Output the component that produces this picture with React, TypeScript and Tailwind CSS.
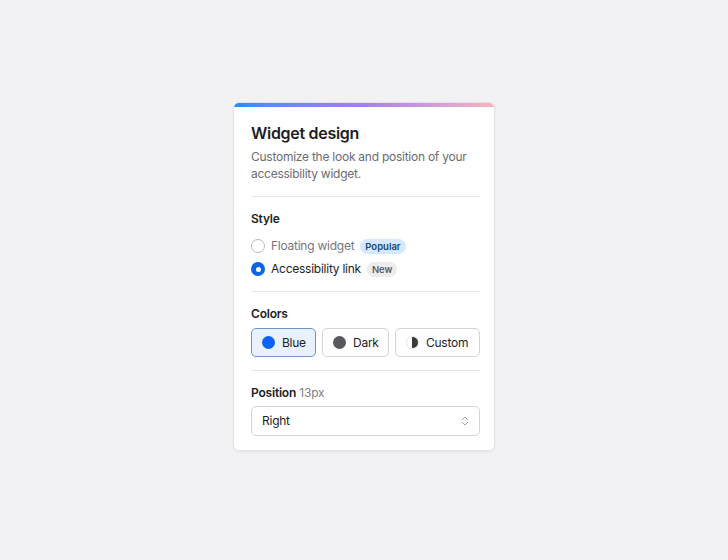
import { ChevronsUpDown } from "lucide-react";

function Radio({ checked }: { checked: boolean }) {
  return checked ? (
    <span className="flex size-[14px] items-center justify-center rounded-full bg-[#0a66e4]">
      <span className="size-[5px] rounded-full bg-white" />
    </span>
  ) : (
    <span className="size-[14px] rounded-full border border-[#b9b9bf] bg-white" />
  );
}

export default function App() {
  return (
    <div
      className="flex min-h-[560px] w-full items-start justify-center bg-[#f2f2f5] pt-[102px] text-[#1d1d1f]"
      style={{ fontFamily: "Inter, 'Liberation Sans', sans-serif" }}
    >
      <div className="w-[262px] overflow-hidden rounded-[6px] border border-[#e3e3e8] bg-white shadow-[0_1px_3px_rgba(0,0,0,0.06)]">
        <div className="h-[4px] bg-gradient-to-r from-[#1a8fef] via-[#a57ef0] to-[#fbb4bd]" />
        <div className="pb-[14px] pl-[17px] pr-[14px] pt-[15px]">
          <h2 className="text-[16px] font-semibold leading-[22px] tracking-[-0.3px]">
            Widget design
          </h2>
          <p className="mt-[5px] text-[12px] leading-[16.5px] tracking-[-0.25px] text-[#6b6b72]">
            Customize the look and position of your accessibility widget.
          </p>

          <div className="mt-[14px] border-t border-[#e6e6ea]" />

          <div className="pt-[14px]">
            <div className="text-[12px] font-semibold leading-[16px] tracking-[-0.2px]">Style</div>
            <div className="mt-[11px] flex flex-col gap-[7px]">
              <div className="flex h-[16px] items-center gap-[6px]">
                <Radio checked={false} />
                <span className="text-[12px] tracking-[-0.25px] text-[#76767d]">Floating widget</span>
                <span className="rounded-full bg-[#d6e8fd] px-[5px] py-[1px] text-[9.5px] font-semibold leading-[13px] text-[#17457a]">
                  Popular
                </span>
              </div>
              <div className="flex h-[16px] items-center gap-[6px]">
                <Radio checked />
                <span className="text-[12px] tracking-[-0.25px] text-[#1d1d1f]">Accessibility link</span>
                <span className="rounded-full bg-[#ececef] px-[5px] py-[1px] text-[9.5px] font-medium leading-[13px] text-[#4a4a50]">
                  New
                </span>
              </div>
            </div>
          </div>

          <div className="mt-[14px] border-t border-[#e6e6ea]" />

          <div className="pt-[14px]">
            <div className="text-[12px] font-semibold leading-[16px] tracking-[-0.2px]">Colors</div>
            <div className="mt-[6px] flex gap-[6px] text-[12px] tracking-[-0.25px]">
              <button
                type="button"
                className="flex h-[29px] w-[65px] items-center gap-[7px] rounded-[5px] border border-[#6e95c6] bg-[#e8f1fc] px-[10px]"
              >
                <span className="size-[13px] shrink-0 rounded-full bg-[#0b63f6]" />
                Blue
              </button>
              <button
                type="button"
                className="flex h-[29px] w-[67px] items-center gap-[7px] rounded-[5px] border border-[#d4d4d9] bg-white px-[10px]"
              >
                <span className="size-[13px] shrink-0 rounded-full bg-[#58585d]" />
                Dark
              </button>
              <button
                type="button"
                className="flex h-[29px] min-w-0 flex-1 items-center gap-[7px] rounded-[5px] border border-[#d4d4d9] bg-white px-[10px]"
              >
                <span className="size-[13px] shrink-0 rounded-full border border-[#e4e4e8] bg-[linear-gradient(90deg,#ffffff_50%,#3a3a3e_50%)]" />
                Custom
              </button>
            </div>
          </div>

          <div className="mt-[13px] border-t border-[#e6e6ea]" />

          <div className="pt-[14px]">
            <div className="text-[12px] leading-[16px] tracking-[-0.2px]">
              <span className="font-semibold">Position</span>{" "}
              <span className="text-[#808087]">13px</span>
            </div>
            <div className="mt-[5px] flex h-[30px] items-center justify-between rounded-[5px] border border-[#d4d4d9] bg-white pl-[10px] pr-[8px] text-[12px] tracking-[-0.25px]">
              <span>Right</span>
              <ChevronsUpDown className="size-[12px] text-[#8a8a90]" strokeWidth={1.6} />
            </div>
          </div>
        </div>
      </div>
    </div>
  );
}
